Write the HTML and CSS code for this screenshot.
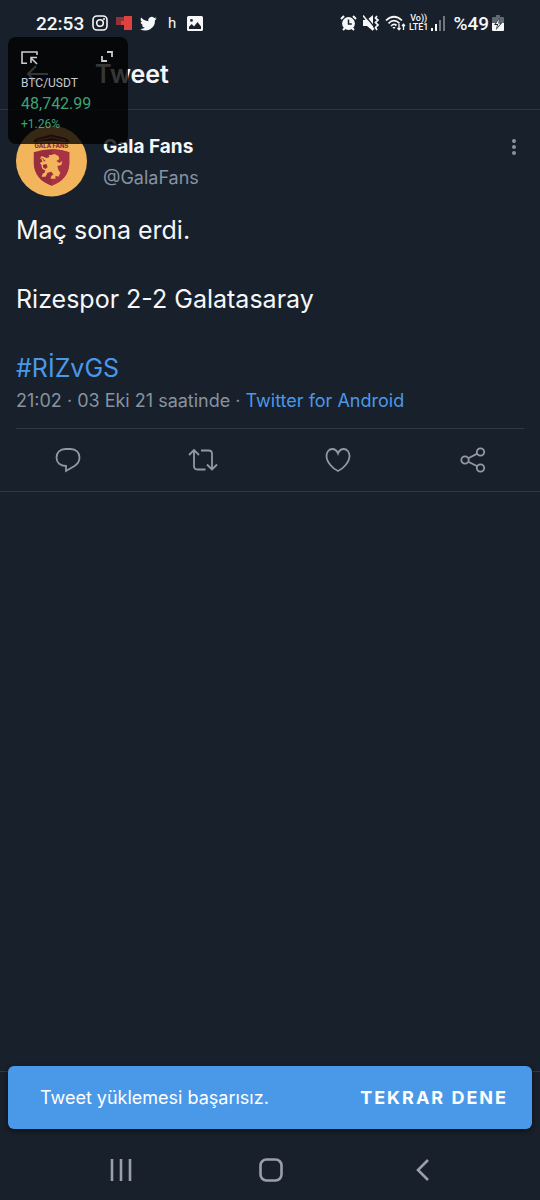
FILE: index.html
```html
<!DOCTYPE html>
<html lang="tr">
<head>
<meta charset="utf-8">
<meta name="viewport" content="width=device-width, initial-scale=1">
<title>Tweet</title>
<link rel="stylesheet" href="styles.css">
</head>
<body>
<div class="status-bar">
  <div class="status-group status-left">
    <span class="clock">22:53</span>
    <svg width="16" height="16" viewBox="0 0 16 16" fill="none" stroke="currentColor" stroke-width="1.6"><rect x="1" y="1" width="14" height="14" rx="4"/><circle cx="8" cy="8" r="3.3"/><circle cx="12" cy="4" r="1" fill="currentColor" stroke="none"/></svg>
    <svg width="16" height="14" viewBox="0 0 16 14"><path fill="#8f3338" d="M0 1h8v8H0z"/><path fill="#df423e" d="M8 0h8v14H8V9H5V5h3z"/></svg>
    <svg width="17" height="17" viewBox="0 0 24 24" fill="currentColor"><path d="M23.6 4.9c-.8.4-1.800.7-2.700.8 1-.6 1.700-1.500 2.100-2.600-.9.600-1.900.9-3 1.200a4.800 4.800 0 0 0-8.200 4.400C7.700 8.500 4.100 6.500 1.700 3.600a4.800 4.800 0 0 0 1.500 6.400c-.8 0-1.500-.2-2.200-.6 0 2.300 1.600 4.300 3.900 4.800-.7.200-1.400.2-2.200.1.600 1.900 2.400 3.300 4.500 3.300A9.600 9.600 0 0 1 .1 19.600 13.600 13.600 0 0 0 21.100 7.400c1-.7 1.800-1.500 2.500-2.500z"/></svg>
    <span class="app-letter">h</span>
    <svg width="16" height="15" viewBox="0 0 16 15" fill="currentColor" fill-rule="evenodd"><path d="M1.500 0h13A1.500 1.500 0 0 1 16 1.500v12a1.500 1.500 0 0 1-1.500 1.500h-13A1.500 1.500 0 0 1 0 13.500v-12A1.500 1.500 0 0 1 1.500 0zM2 10.800V13h12v-2.500L10.500 6 7 10.500 4.700 8zM4.500 3a1.400 1.400 0 1 0 0 2.800 1.400 1.400 0 0 0 0-2.800z"/></svg>
  </div>
  <div class="status-group status-right">
    <div class="status-group alerts">
      <svg width="17" height="16" viewBox="0 0 17 16"><circle cx="8.500" cy="8.500" r="6.400" fill="currentColor"/><path d="M8.500 4.500v4.500h3.300" fill="none" stroke="#18202b" stroke-width="1.500"/><path d="M1 4l3-3M16 4l-3-3M3 15l2-2M14 15l-2-2" stroke="currentColor" stroke-width="2"/></svg>
      <svg width="16" height="16" viewBox="0 0 16 16"><path d="M0 5h4l6-5v16l-6-5H0z" fill="currentColor"/><path d="M1.500 0l10 12" stroke="#18202b" stroke-width="1.300"/><path d="M0 .5l11 14" stroke="currentColor" stroke-width="1.500"/><path d="M14 1l-1.500 2L15 5l-2.500 2.500L15 10l-2.500 2.500L14 15" fill="none" stroke="currentColor" stroke-width="1.700"/></svg>
      <svg width="21" height="16" viewBox="0 0 21 16" fill="none" stroke="currentColor" stroke-width="1.700"><path d="M1 5.500Q9 -2 17 5.500M3.500 8.300Q9 3 14.500 8.300M6 11q3-2.800 5.500-.5"/><path d="M7.300 12h3.400L9 14z" fill="currentColor" stroke="none"/><path d="M14 9v5.500M12.500 13l1.500 1.700 1.500-1.700M18.500 15V9.500M17 11l1.500-1.700L20 11" stroke-width="1.300"/></svg>
    </div>
    <div class="status-group network">
      <span class="volte"><span>Vo))</span><span>LTE1</span></span>
      <svg width="15" height="15" viewBox="0 0 15 15" fill="currentColor"><path d="M0 12h2v3H0zM4 8h2v7H4z"/><path opacity=".4" d="M8 4h2v11H8zM12 0h2v15h-2z"/></svg>
    </div>
    <div class="status-group battery">
      <span class="battery-text">%49</span>
      <svg width="12" height="16" viewBox="0 0 12 16"><path fill="#626871" d="M4 0h4v2h3q1 0 1 1v5H0V3q0-1 1-1h3z"/><path fill="currentColor" d="M0 8h12v7q0 1-1 1H1q-1 0-1-1z"/><path fill="#18202b" d="M7.500 3L2 10h3l-1 5 6-7H7z"/><path fill="currentColor" d="M7 4L3.800 9h2.400l-1.200 4 3.500-4.500H6.300z"/></svg>
    </div>
  </div>
</div>

<header class="app-bar">
  <button class="icon-button back" aria-label="Geri"><svg width="22" height="18" viewBox="0 0 22 18" fill="none" stroke="currentColor" stroke-width="2"><path d="M22 9H2M10 1L2 9l8 8"/></svg></button>
  <h1 class="title">Tweet</h1>
</header>

<main class="content">
  <article class="tweet">
    <div class="author">
      <svg class="avatar" viewBox="0 0 72 72" role="img" aria-label="Gala Fans">
        <circle cx="36" cy="36" r="36" fill="#f2b55c"/>
        <path d="M18 15q2-1 3-2l15-4 15 4q1 1 3 2v2q-18-3-36 0z" fill="#8d2f39"/>
        <path d="M22 15l14-3 14 3" fill="none" stroke="#f2b55c" stroke-width="1"/>
        <text class="crest-text" x="36" y="23" text-anchor="middle">GALA FANS</text>
        <path d="M18 27q18-6 36 0v12q-1 16-18 22-17-6-18-22z" fill="#972d3d"/>
        <path d="M36 24q10 0 18 3v12q-1 16-18 22z" fill="#a93343"/>
        <path d="M36 30l3-1 4 2 1 3-3 2 3 2 3-2-1 4-4 1 1 4 2 3-2 4-3-1v3h-5l1-3 2-1-2-3-4 1-2 4h-4l1-3 2-1 1-4 2-2-1-3-5 1-2-2 2-1 4-1-3-3-3 1 2-3 5 2 3-1-1-2z" fill="#f2b55c"/>
        <path d="M31 45q-6-1-4-6 1-4-1-5" fill="none" stroke="#f2b55c" stroke-width="1.500"/>
      </svg>
      <div class="names"><strong class="name">Gala Fans</strong><span class="handle">@GalaFans</span></div>
      <button class="icon-button more" aria-label="Diğer"><svg width="6" height="18" viewBox="0 0 6 18" fill="currentColor"><circle cx="3" cy="3" r="2"/><circle cx="3" cy="9" r="2"/><circle cx="3" cy="15" r="2"/></svg></button>
    </div>
    <div class="body-text">
      <p>Maç sona erdi.</p>
      <p>Rizespor 2-2 Galatasaray</p>
      <p><a href="#riz">#RİZvGS</a></p>
    </div>
    <div class="meta">21:02 · 03 Eki 21 saatinde · <a href="#source">Twitter for Android</a></div>
  </article>
  <div class="actions">
    <button class="icon-button" aria-label="Yanıtla"><svg width="26" height="26" viewBox="0 0 26 26"><path d="M11 19c-6 0-9.500-3.500-9.500-8.500S5 2 10.500 2h5c5.500 0 9 3.500 9 8.500 0 4-2 6.500-5 8.500L11 24z"/></svg></button>
    <button class="icon-button" aria-label="Retweetle"><svg width="30" height="26" viewBox="0 0 30 26"><path d="M1 8l5-5 5 5M6 4v15q0 3.500 3.500 3.500h8M29 17.500l-5 5-5-5M24 22V7q0-3.500-3.500-3.500H13"/></svg></button>
    <button class="icon-button" aria-label="Beğen"><svg width="26" height="26" viewBox="0 0 26 26"><path d="M13 24C8 22 1.500 15 1.500 9c0-4 2.500-7 5.800-7C10 2 12 4 13 6.500 14 4 16 2 18.700 2c3.300 0 5.800 3 5.800 7C24.500 15 18 22 13 24z"/></svg></button>
    <button class="icon-button" aria-label="Paylaş"><svg width="26" height="26" viewBox="0 0 26 26"><circle cx="5" cy="13" r="3.700"/><circle cx="20.500" cy="5" r="3.700"/><circle cx="20.500" cy="21" r="3.700"/><path d="M8.300 11.300l9-4.700M8.300 14.700l9 4.600"/></svg></button>
  </div>
</main>

<div class="reply-bar">
  <div class="snackbar" role="status">
    <span class="snackbar-text">Tweet yüklemesi başarısız.</span>
    <button class="retry">TEKRAR DENE</button>
  </div>
</div>

<nav class="system-nav">
  <button class="icon-button" aria-label="Son uygulamalar"><svg width="22" height="22" viewBox="0 0 22 22"><path d="M2 0v22M11 0v22M20 0v22"/></svg></button>
  <button class="icon-button" aria-label="Ana ekran"><svg width="24" height="24" viewBox="0 0 24 24"><rect x="1.500" y="1.500" width="21" height="21" rx="6"/></svg></button>
  <button class="icon-button" aria-label="Geri dön"><svg width="14" height="22" viewBox="0 0 14 22"><path d="M13 1L3 11l10 10"/></svg></button>
</nav>

<aside class="ticker">
  <div class="ticker-tools">
    <button class="icon-button" aria-label="Uygulamayı aç"><svg width="17" height="14" viewBox="0 0 17 14" fill="none" stroke="currentColor" stroke-width="1.600"><path d="M6 12.200H1V1h15v3M16 13l-6-6M10 12V6.500h6"/></svg></button>
    <button class="icon-button" aria-label="Büyüt"><svg width="12" height="12" viewBox="0 0 12 12" fill="none" stroke="currentColor" stroke-width="1.800"><path d="M6 1h5v5M1 5v5h5"/></svg></button>
  </div>
  <span class="pair">BTC/USDT</span>
  <span class="price">48,742.99</span>
  <span class="change">+1.26%</span>
</aside>
</body>
</html>
```
FILE: styles.css
```css
* { box-sizing: border-box; }

body {
  position: relative;
  display: flex;
  flex-direction: column;
  min-height: 100vh;
  margin: 0;
  background: #18202b;
  color: #f5f7f9;
  font-family: Inter, "Noto Sans", sans-serif;
}

svg { display: block; flex: none; }
p, h1 { margin: 0; }
a { color: #4a99e9; text-decoration: none; }
button { border: 0; padding: 0; background: none; color: inherit; font: inherit; }

.icon-button { display: flex; align-items: center; justify-content: center; }

.status-bar {
  display: flex;
  justify-content: space-between;
  height: 46px;
  padding: 0 36px;
  font-family: Roboto, sans-serif;
}
.status-group { display: flex; align-items: center; }
.status-left { gap: 8px; }
.status-right { gap: 3px; }
.alerts { gap: 6px; }
.network { gap: 3px; padding-right: 4px; }
.battery { gap: 3px; }
.clock, .battery-text { font-size: 19px; font-weight: 500; }
.app-letter { width: 14px; font-size: 15px; text-align: center; }
.volte {
  display: flex;
  flex-direction: column;
  align-items: center;
  font-size: 9px;
  font-weight: 500;
  line-height: 9px;
}

.app-bar {
  display: flex;
  align-items: center;
  gap: 47px;
  height: 64px;
  padding: 0 26px 8px;
  border-bottom: 1px solid #2c3540;
}
.title { font-size: 25px; font-weight: 600; line-height: 32px; }

.content { flex: 1; }
.tweet { margin: 0 16px; padding-top: 15px; border-bottom: 1px solid #303944; }
.author { display: flex; align-items: flex-start; gap: 16px; }
.avatar { width: 71px; height: 72px; }
.crest-text { fill: #8d2f39; font-size: 6px; font-weight: 800; }
.names { display: flex; flex: 1; flex-direction: column; gap: 7px; padding-top: 10px; line-height: 24px; }
.name { font-size: 19px; font-weight: 700; }
.handle { color: #8793a0; font-size: 18px; }
.more { width: 21px; padding-top: 13px; color: #8793a0; }

.body-text {
  display: flex;
  flex-direction: column;
  gap: 35px;
  padding-top: 16px;
  font-size: 25px;
  line-height: 34px;
}
.meta { padding: 4px 0 15px; color: #8793a0; font-size: 18px; line-height: 24px; }

.actions {
  display: grid;
  grid-template-columns: repeat(4, 1fr);
  height: 63px;
  border-bottom: 1px solid #303944;
  color: #9299a4;
  fill: none;
  stroke: currentColor;
  stroke-width: 1.8px;
}

.reply-bar { position: relative; height: 69px; border-top: 1px solid #303944; }
.snackbar {
  position: absolute;
  top: -6px;
  right: 8px;
  left: 8px;
  display: flex;
  align-items: center;
  justify-content: space-between;
  height: 63px;
  padding: 0 24px 0 32px;
  border-radius: 6px;
  background: #4a99e9;
  box-shadow: 0 2px 5px #0c1118;
  color: #fff;
}
.snackbar-text { font-size: 18px; }
.retry { font-size: 18px; font-weight: 700; letter-spacing: 2px; }

.system-nav {
  display: grid;
  grid-template-columns: repeat(3, 28%);
  justify-content: center;
  height: 60px;
  padding-left: 3px;
  color: #9b9fa9;
  fill: none;
  stroke: currentColor;
  stroke-width: 2.6px;
}

.ticker {
  position: absolute;
  top: 37px;
  left: 8px;
  display: flex;
  flex-direction: column;
  width: 120px;
  padding: 14px 15px 11px 13px;
  border-radius: 8px;
  background: rgba(0, 0, 0, 0.78);
  color: #c9ccd0;
  font-family: Roboto, sans-serif;
}
.ticker-tools { display: flex; justify-content: space-between; height: 23px; align-items: flex-start; }
.pair { font-size: 12px; line-height: 18px; }
.price { color: #3fa276; font-size: 16px; line-height: 23px; }
.change { color: #3fa276; font-size: 12px; line-height: 18px; }
```
